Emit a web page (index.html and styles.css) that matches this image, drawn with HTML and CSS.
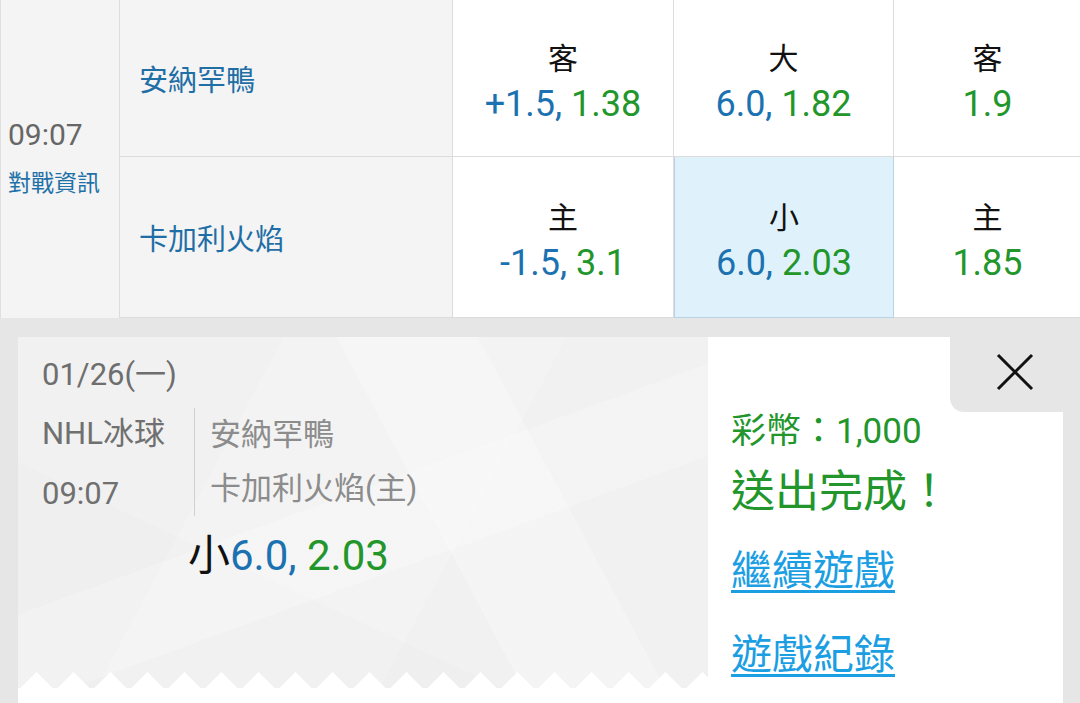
FILE: index.html
```html
<!DOCTYPE html>
<html lang="zh-Hant">
<head>
  <meta charset="UTF-8" />
  <meta name="viewport" content="width=device-width, initial-scale=1.0"/>
  <title>投注單 - NHL冰球</title>
  <link rel="stylesheet" href="styles.css">
</head>
<body>

  <div class="odds-grid">
    <div class="time-cell">
      <div class="time">09:07</div>
      <a class="info-link">對戰資訊</a>
    </div>
    <div class="team-cell">安納罕鴨</div>
    <div class="odd-cell">
      <span class="odd-label">客</span>
      <span class="odd-value"><span class="blue">+1.5,</span> <span class="green">1.38</span></span>
    </div>
    <div class="odd-cell">
      <span class="odd-label">大</span>
      <span class="odd-value"><span class="blue">6.0,</span> <span class="green">1.82</span></span>
    </div>
    <div class="odd-cell">
      <span class="odd-label">客</span>
      <span class="odd-value"><span class="green">1.9</span></span>
    </div>

    <div class="team-cell">卡加利火焰</div>
    <div class="odd-cell">
      <span class="odd-label">主</span>
      <span class="odd-value"><span class="blue">-1.5,</span> <span class="green">3.1</span></span>
    </div>
    <div class="odd-cell selected">
      <span class="odd-label">小</span>
      <span class="odd-value"><span class="blue">6.0,</span> <span class="green">2.03</span></span>
    </div>
    <div class="odd-cell">
      <span class="odd-label">主</span>
      <span class="odd-value"><span class="green">1.85</span></span>
    </div>
  </div>

  <div class="slip-area">
    <div class="ticket">
      <div class="ticket-body">
        <div class="ticket-date">01/26(一)</div>
        <div class="ticket-match">
          <div class="match-meta">
            <div>NHL冰球</div>
            <div>09:07</div>
          </div>
          <div class="match-teams">
            <div>安納罕鴨</div>
            <div>卡加利火焰(主)</div>
          </div>
        </div>
        <div class="ticket-pick">小<span class="blue">6.0,</span> <span class="green">2.03</span></div>
      </div>
      <div class="zigzag"></div>
      <div class="ticket-foot"></div>
    </div>

    <div class="result-panel">
      <div class="panel-top">
        <button class="close-btn" aria-label="關閉">
          <svg width="38" height="38" viewBox="0 0 38 38">
            <path d="M2 2 L36 36 M36 2 L2 36" stroke="#111" stroke-width="3" fill="none"/>
          </svg>
        </button>
      </div>
      <div class="coins">彩幣：1,000</div>
      <div class="done">送出完成！</div>
      <a class="panel-link first">繼續遊戲</a>
      <a class="panel-link">遊戲紀錄</a>
    </div>
  </div>

</body>
</html>
```

FILE: styles.css
```css
body {
  margin: 0;
  width: 1080px;
  height: 703px;
  overflow: hidden;
  background: #e6e6e6;
  font-family: Roboto, "Noto Sans CJK TC", sans-serif;
}

.blue {
  color: #1c72b0;
}

.green {
  color: #22962b;
}

/* odds table */
.odds-grid {
  display: grid;
  grid-template-columns: 119px 333px 221px 220px 187px;
  grid-template-rows: 157px 161px;
  background: #fff;
  border-left: 1px solid #e0e0e0;
}

.time-cell {
  grid-row: span 2;
  background: #f4f4f4;
  border-right: 1px solid #dcdcdc;
  display: flex;
  flex-direction: column;
  justify-content: center;
  padding-left: 7px;
}

.time {
  font-size: 30px;
  line-height: 50px;
  color: #666;
}

.info-link {
  font-size: 23px;
  line-height: 48px;
  color: #1f71a8;
}

.team-cell {
  background: #f4f4f4;
  border-right: 1px solid #dcdcdc;
  border-bottom: 1px solid #dcdcdc;
  display: flex;
  align-items: center;
  padding-left: 19px;
  font-size: 29px;
  color: #1f6ea6;
}

.odd-cell {
  border-right: 1px solid #dcdcdc;
  border-bottom: 1px solid #dcdcdc;
  display: flex;
  flex-direction: column;
  align-items: center;
  justify-content: center;
  padding-top: 3px;
}

.odd-cell:last-child,
.odd-cell:nth-child(5) {
  border-right: none;
}

.odd-cell.selected {
  background: #dff2fc;
  border: 1px solid #b8d3e4;
  border-top: none;
}

.odd-label {
  font-size: 30px;
  line-height: 48px;
  color: #111;
}

.odd-value {
  font-size: 36px;
  line-height: 42px;
}

/* bet slip */
.slip-area {
  display: flex;
  height: 385px;
  box-sizing: border-box;
  padding: 19px 17px 0 18px;
}

.ticket {
  width: 690px;
  display: flex;
  flex-direction: column;
  background:
    linear-gradient(62deg, transparent 58%, rgba(255,255,255,0.25) 58%, rgba(255,255,255,0.25) 74%, transparent 74%),
    linear-gradient(118deg, rgba(0,0,0,0.006) 30%, transparent 30%, transparent 62%, rgba(0,0,0,0.008) 62%),
    linear-gradient(160deg, transparent 45%, rgba(255,255,255,0.22) 45%, rgba(255,255,255,0.22) 60%, transparent 60%),
    linear-gradient(25deg, rgba(0,0,0,0.006) 35%, transparent 35%),
    #f3f3f3;
}

.ticket-body {
  height: 335px;
  flex: none;
  padding: 18px 0 0 24px;
  box-sizing: border-box;
}

.ticket-date {
  font-size: 31px;
  line-height: 40px;
  color: #6e6e6e;
}

.ticket-match {
  display: flex;
  align-items: flex-start;
  margin-top: 9px;
  font-size: 31px;
}

.match-meta {
  width: 152px;
  line-height: 60px;
  color: #707070;
}

.match-teams {
  margin-top: 4px;
  padding-left: 15px;
  border-left: 1px solid #d0d0d0;
  line-height: 54px;
  color: #8c8c8c;
}

.ticket-pick {
  margin: 7px 0 0 146px;
  font-size: 42px;
  line-height: 50px;
  color: #111;
}

.zigzag {
  height: 16px;
  flex: none;
  background: conic-gradient(from 135deg at 50% 0, #fff 90deg, transparent 0) 0 0 / 37px 16px repeat-x;
}

.ticket-foot {
  flex: 1;
  background: #fff;
}

.result-panel {
  width: 355px;
  background: #fff;
  padding-left: 23px;
  box-sizing: border-box;
}

.panel-top {
  display: flex;
  justify-content: flex-end;
}

.close-btn {
  width: 113px;
  height: 75px;
  border: none;
  background: #e6e6e6;
  border-bottom-left-radius: 14px;
  padding: 0 29px 5px 0;
  display: flex;
  align-items: center;
  justify-content: flex-end;
}

.coins {
  font-size: 35px;
  line-height: 40px;
  color: #22962b;
}

.done {
  margin-top: 10px;
  font-size: 44px;
  line-height: 60px;
  color: #22962b;
}

.panel-link {
  display: block;
  width: max-content;
  font-size: 41px;
  line-height: 60px;
  color: #1c9ee2;
  text-decoration: underline;
  text-decoration-thickness: 3px;
  text-underline-offset: 5px;
  margin-top: 24px;
}

.panel-link.first {
  margin-top: 19px;
}
```
